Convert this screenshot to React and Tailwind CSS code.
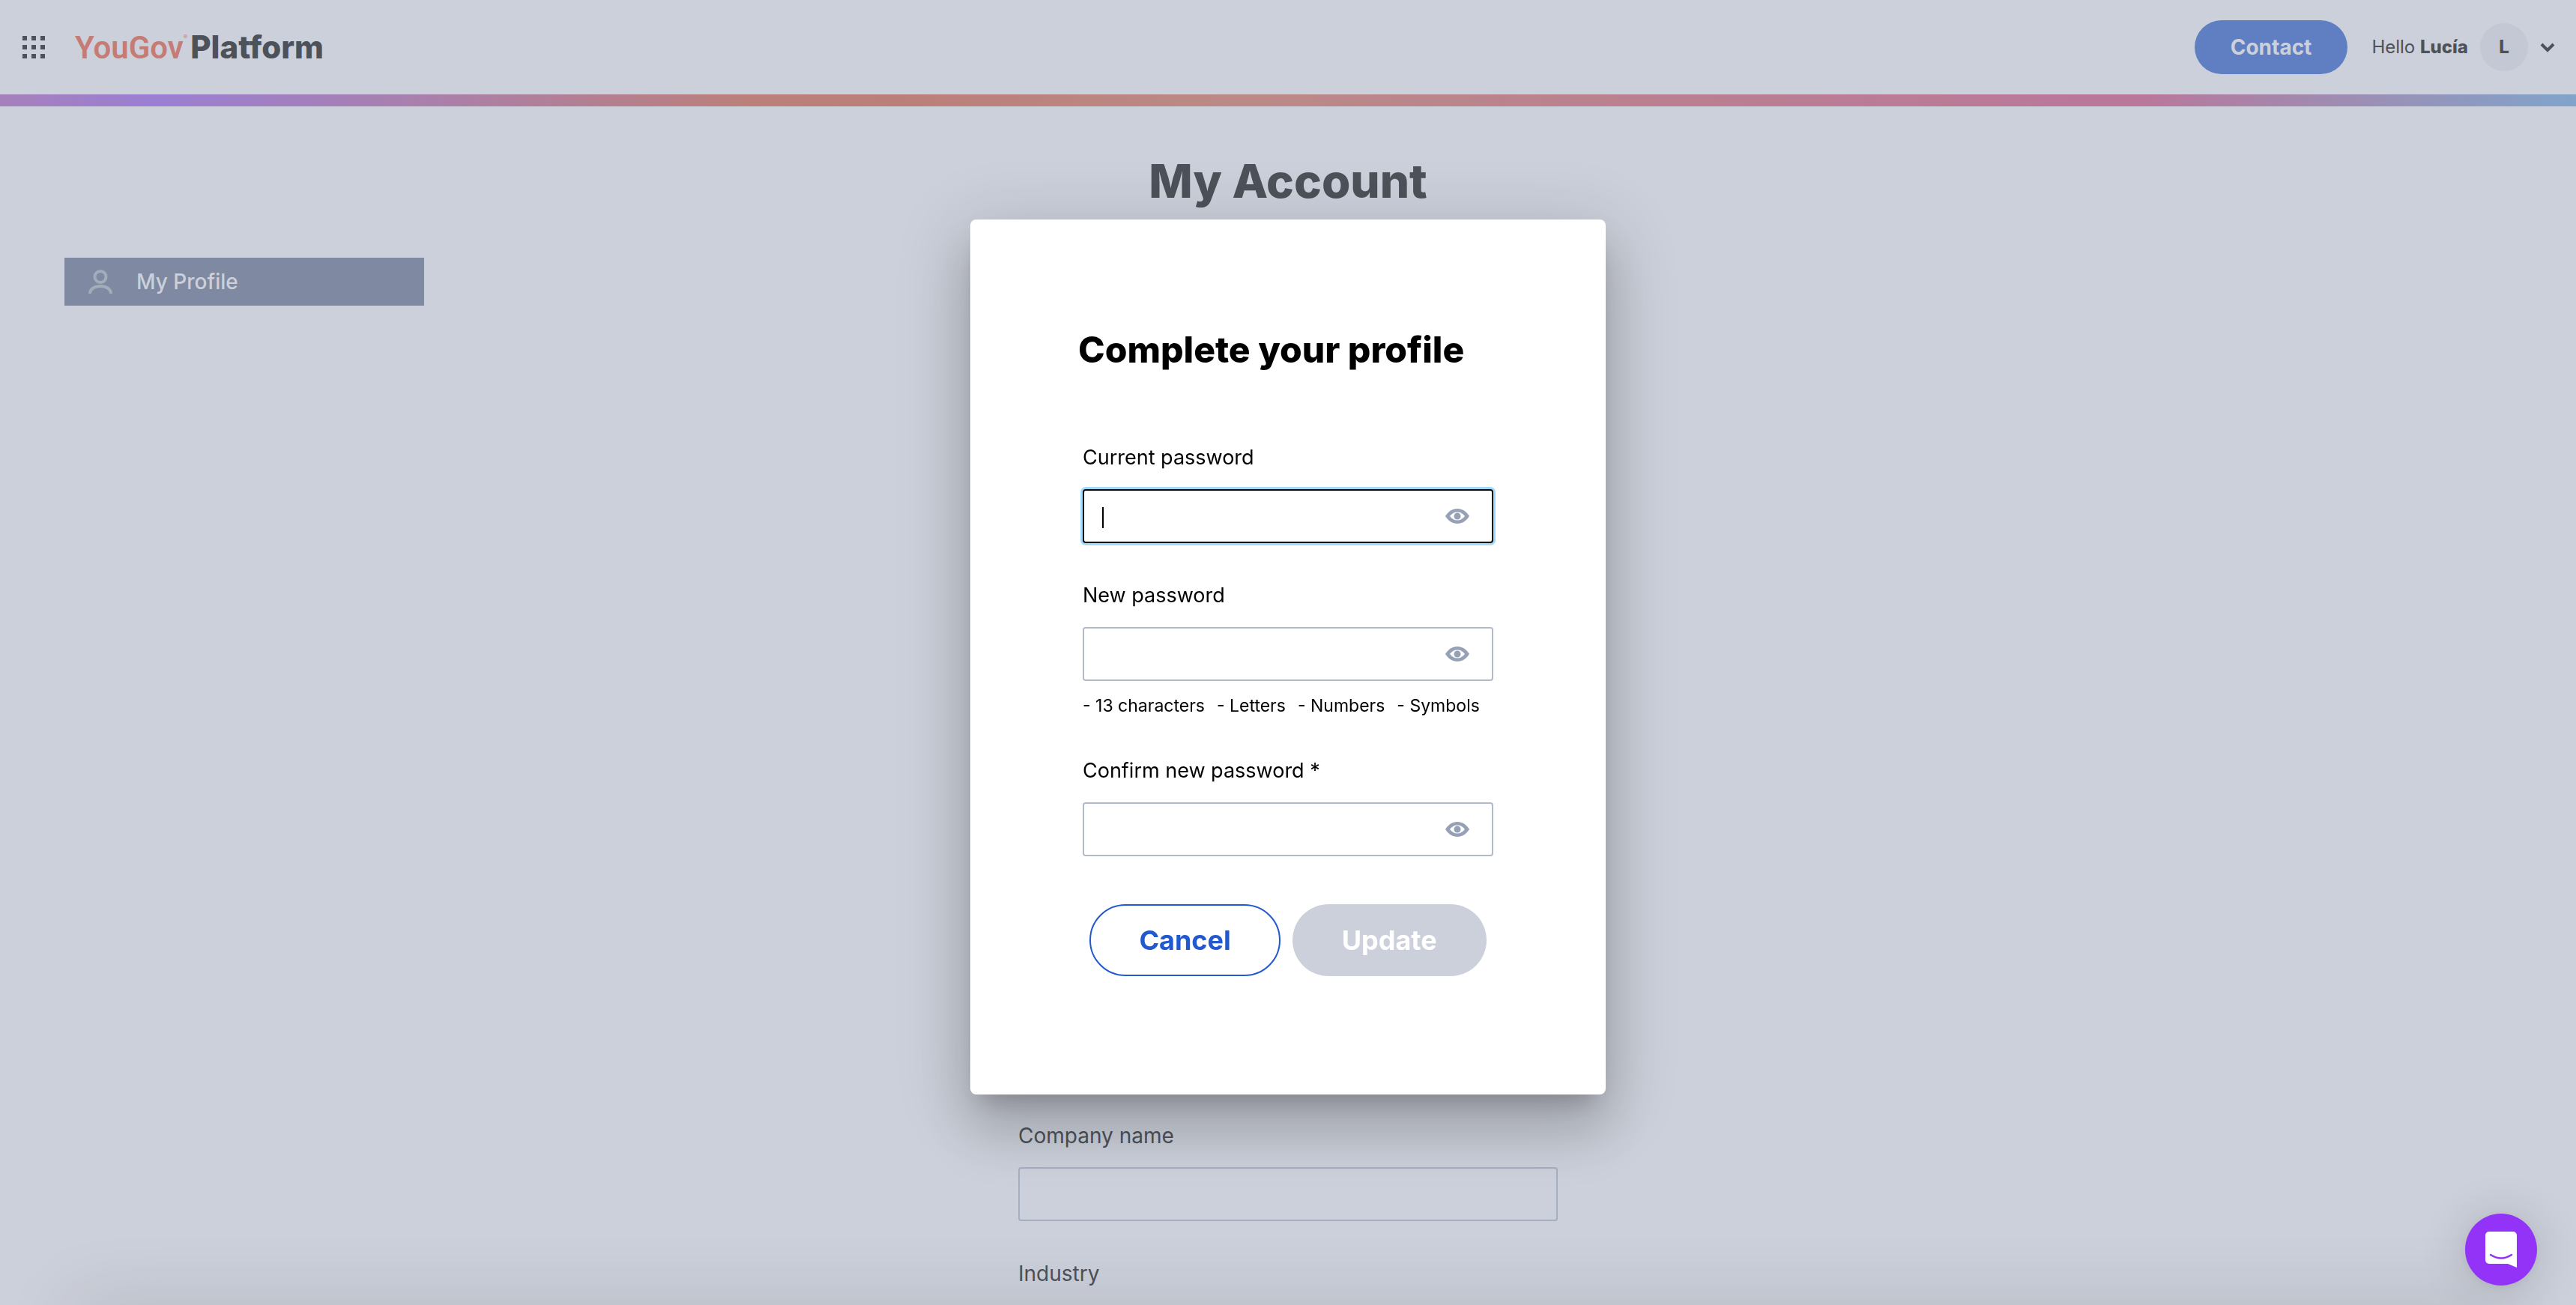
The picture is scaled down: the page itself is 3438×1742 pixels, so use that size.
import { FiChevronDown } from 'react-icons/fi';

function EyeIcon() {
  return (
    <svg viewBox="0 0 32 20" className="w-8 h-5" aria-hidden="true">
      <path d="M0 10C4 3.500 9.500 0 16 0s12 3.500 16 10c-4 6.500-9.500 10-16 10S4 16.500 0 10z" fill="#97a1b5" />
      <path d="M6 10c2.500-3.500 6-5.500 10-5.500s7.500 2 10 5.500c-2.500 3.500-6 5.500-10 5.500S8.500 13.500 6 10z" fill="#fff" />
      <circle cx="16" cy="10" r="4.500" fill="#97a1b5" />
    </svg>
  );
}

function PasswordField({ id, label, autoFocus, hints }) {
  return (
    <div>
      <label htmlFor={id} className="block text-[27px] leading-9">{label}</label>
      <div className="relative mt-6">
        <input
          id={id}
          type="password"
          autoFocus={autoFocus}
          className="peer block w-full h-[72px] pl-6 pr-20 rounded-sm border-2 border-[#b2bac9] text-[28px] caret-transparent outline-none focus:border-black focus:ring-3 focus:ring-[#a0dbfb]"
        />
        <span className="absolute left-[26px] top-6 hidden peer-focus:block w-0.5 h-7 bg-black" />
        <button type="button" aria-label="Show password" className="absolute right-8 top-[26px]">
          <EyeIcon />
        </button>
      </div>
      {hints && (
        <ul className="flex gap-4 mt-4 text-[23px] leading-[34px] whitespace-nowrap">
          {hints.map((hint) => (
            <li key={hint}>- {hint}</li>
          ))}
        </ul>
      )}
    </div>
  );
}

function Header() {
  return (
    <header>
      <div className="flex items-center justify-between h-[126px] pl-[30px] pr-[22px]">
        <div className="flex items-center gap-10">
          <button type="button" aria-label="Apps" className="grid grid-cols-3 gap-1.5">
            {[...Array(9)].map((_, i) => (
              <span key={i} className="size-1.5 bg-[#4d5159]" />
            ))}
          </button>
          <a href="#" className="flex items-baseline text-[42px] leading-12 text-[#4d5159]">
            <span className="font-[Roboto,sans-serif] font-semibold text-[#c67c76]">YouGov</span>
            <span className="self-start mr-1 text-[8px] leading-5 text-[#c67c76]">®</span>
            <span className="font-extrabold">Platform</span>
          </a>
        </div>
        <div className="flex items-center text-[24px]">
          <button type="button" className="h-[72px] px-12 rounded-full bg-[#607fc2] text-[28px] font-bold text-[#ccd0da]">
            Contact
          </button>
          <span className="ml-8">Hello <b className="font-extrabold">Lucía</b></span>
          <span className="flex items-center justify-center size-16 ml-4 rounded-full bg-[#c4c8d4] font-extrabold">L</span>
          <button type="button" aria-label="Account menu" className="ml-2.5">
            <FiChevronDown className="size-8" strokeWidth={3} strokeLinecap="butt" strokeLinejoin="miter" />
          </button>
        </div>
      </div>
      <div className="h-4 bg-[linear-gradient(90deg,#a67fbb_0%,#9b7fd4_6%,#a67fb5_14%,#bb807a_29%,#bb7f79_35%,#bb8a86_48%,#ba8090_64%,#b9779b_83%,#80a4cc_100%)]" />
    </header>
  );
}

export default function App() {
  return (
    <div className="relative min-h-screen overflow-hidden bg-[#ccd0da] font-[Inter,sans-serif] text-[#4d5159]">
      <Header />
      <main>
        <h1 className="pt-[60px] text-center text-[62px] leading-20 font-extrabold">My Account</h1>
        <nav className="mt-[62px] ml-[86px] w-[480px]">
          <a href="#" className="flex items-center h-16 pl-8 gap-8 bg-[#7f89a1] text-[28px] font-medium text-[#ccd0da]">
            <svg viewBox="0 0 32 32" className="size-8 text-[#a2adbb]" fill="none" stroke="currentColor" strokeWidth="4">
              <circle cx="16" cy="9.500" r="7.500" />
              <path d="M2 32c0-6 6-10 14-10s14 4 14 10" />
            </svg>
            My Profile
          </a>
        </nav>
        <form className="w-[720px] mx-auto mt-[1090px] text-[28px] leading-9">
          <label htmlFor="company" className="block">Company name</label>
          <input id="company" type="text" className="block w-full h-[72px] mt-6 mb-[52px] px-6 rounded-sm border-2 border-[#a6afc0]" />
          <label htmlFor="industry" className="block">Industry</label>
          <input id="industry" type="text" className="block w-full h-[72px] mt-6 px-6 rounded-sm border-2 border-[#a6afc0]" />
        </form>
      </main>

      {/* shadow of the notice bar parked below the fold */}
      <div className="fixed top-full inset-x-24 h-16 shadow-[0_0_100px_rgba(0,0,0,0.13)]" />

      <div className="fixed inset-0 pt-[293px]">
        <section
          role="dialog"
          aria-labelledby="title"
          className="w-[848px] h-[1168px] mx-auto px-36 pt-[142px] rounded-lg bg-white text-black shadow-[0_22px_30px_-14px_rgba(0,0,0,0.2),0_48px_76px_6px_rgba(0,0,0,0.14),0_18px_92px_16px_rgba(0,0,0,0.12)]"
        >
          <h2 id="title" className="text-[48px] leading-16 font-extrabold whitespace-nowrap">Complete your profile</h2>
          <form className="flex flex-col mt-[94px] px-1.5 gap-[52px]">
            <PasswordField id="current" label="Current password" autoFocus />
            <PasswordField id="new" label="New password" hints={['13 characters', 'Letters', 'Numbers', 'Symbols']} />
            <PasswordField id="confirm" label="Confirm new password *" />
            <div className="flex justify-center gap-4 mt-3 text-[36px] font-bold">
              <button type="button" className="h-24 px-16 rounded-full border-2 border-[#2259d0] text-[#2259d0]">Cancel</button>
              <button type="submit" disabled className="h-24 px-[66px] rounded-full bg-[#ccd0da] text-white">Update</button>
            </div>
          </form>
        </section>
      </div>

      <button type="button" aria-label="Open chat" className="fixed right-[52px] bottom-[26px] flex items-center justify-center size-24 rounded-full bg-[#9333f7] shadow-[0_2px_12px_rgba(0,0,0,0.06),0_4px_64px_rgba(0,0,0,0.16)]">
        <svg viewBox="0 0 42 48" className="w-[42px] h-12">
          <path d="M5 0h32a5 5 0 0 1 5 5v43l-12-5H5a5 5 0 0 1-5-5V5a5 5 0 0 1 5-5z" fill="#fff" />
          <path d="M7 31q14 9 28 0" fill="none" stroke="#9333f7" strokeWidth="2.500" strokeLinecap="round" />
        </svg>
      </button>
    </div>
  );
}
